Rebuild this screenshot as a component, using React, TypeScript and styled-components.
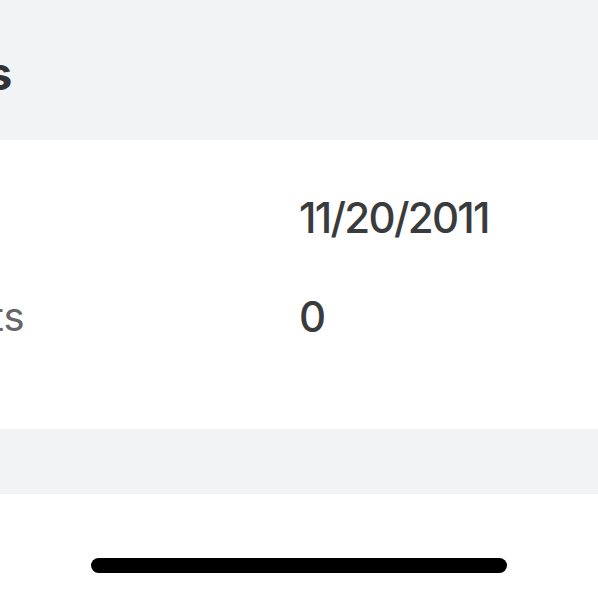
import React from "react";
import styled, { createGlobalStyle } from "styled-components";

const Global = createGlobalStyle`
  html, body { margin: 0; padding: 0; background: #ffffff; }
  body { font-family: Inter, "Open Sans", sans-serif; overflow: hidden; }
`;

const Screen = styled.div`
  width: 598px;
  height: 597px;
  overflow: hidden;
  display: flex;
  flex-direction: column;
  background: #ffffff;
`;

const SectionHeader = styled.div`
  height: 140px;
  background: #f2f3f5;
  display: flex;
  align-items: center;
  flex-shrink: 0;
`;

const HeaderTitle = styled.h2<{ $offset: number }>`
  margin: 6px 0 0 ${(p) => p.$offset}px;
  font-size: 46px;
  font-weight: 700;
  color: #333335;
  white-space: nowrap;
  line-height: 1;
`;

const Rows = styled.div`
  padding: 28px 0 63px;
  display: flex;
  flex-direction: column;
`;

const Row = styled.div`
  height: 99px;
  display: flex;
  align-items: center;
`;

const Label = styled.div<{ $offset: number }>`
  width: 300px;
  flex-shrink: 0;
  display: flex;
  font-size: 40px;
  color: #666668;
  white-space: nowrap;
  & > span {
    margin-left: ${(p) => p.$offset}px;
  }
`;

const Value = styled.div`
  margin-left: -1px;
  font-size: 42px;
  font-weight: 500;
  letter-spacing: -1.7px;
  color: #3a3b3d;
  white-space: nowrap;
`;

const Spacer = styled.div`
  height: 65px;
  background: #f2f3f5;
  flex-shrink: 0;
`;

const Footer = styled.div`
  flex: 1;
  display: flex;
  justify-content: center;
  padding-top: 64px;
`;

const HomeIndicator = styled.div`
  width: 416px;
  height: 15px;
  border-radius: 8px;
  background: #000000;
`;

const rows = [
  { label: "Joined", value: "11/20/2011" },
  { label: "Total Posts", value: "0" },
];

export default function App() {
  return (
    <>
      <Global />
      <Screen>
        <SectionHeader>
          <HeaderTitle $offset={-104}>Stats</HeaderTitle>
        </SectionHeader>
        <Rows>
          {rows.map((r) => (
            <Row key={r.label}>
              <Label $offset={-183}>
                <span>{r.label}</span>
              </Label>
              <Value>{r.value}</Value>
            </Row>
          ))}
        </Rows>
        <Spacer />
        <Footer>
          <HomeIndicator />
        </Footer>
      </Screen>
    </>
  );
}
